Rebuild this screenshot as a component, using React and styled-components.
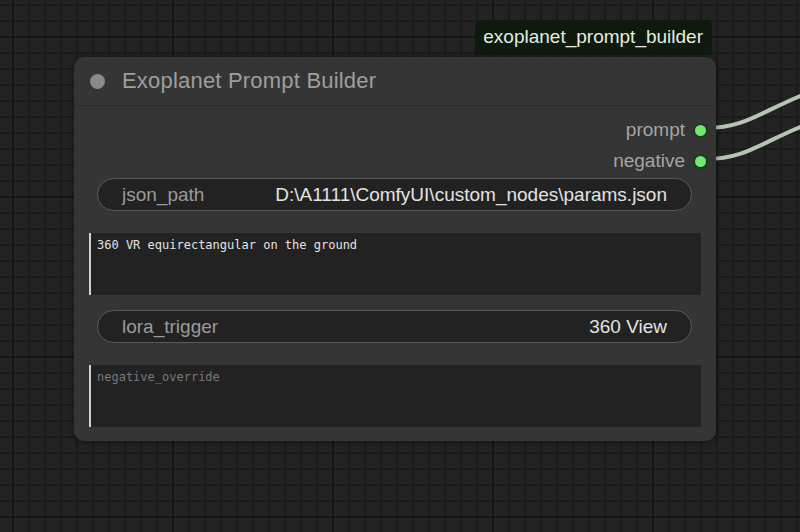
import React from "react";
import styled, { createGlobalStyle } from "styled-components";

const GlobalStyle = createGlobalStyle`
  html, body {
    margin: 0;
    padding: 0;
    background: #222222;
  }
  * { box-sizing: border-box; }
`;

const Canvas = styled.div`
  position: relative;
  width: 800px;
  height: 532px;
  overflow: hidden;
  background-color: #232323;
  background-image:
    linear-gradient(to right, #161616 2px, transparent 2px),
    linear-gradient(to bottom, #161616 2px, transparent 2px),
    linear-gradient(to right, #1a1a1a 2px, transparent 2px),
    linear-gradient(to bottom, #1a1a1a 2px, transparent 2px);
  background-size: 160px 160px, 160px 160px, 16px 16px, 16px 16px;
  background-position: 12px 36px, 12px 36px, 12px 4px, 12px 4px;
  font-family: "Liberation Sans", Arial, sans-serif;
`;

const Links = styled.svg`
  position: absolute;
  left: 0;
  top: 0;
  pointer-events: none;
`;

const Node = styled.div`
  position: absolute;
  left: ${(p) => p.x}px;
  top: ${(p) => p.y}px;
  width: ${(p) => p.w}px;
  background: #353535;
  border-radius: 10px;
  box-shadow: 0 1px 6px rgba(0, 0, 0, 0.45);
  display: flex;
  flex-direction: column;
`;

const Badge = styled.div`
  position: absolute;
  right: 4px;
  bottom: 100%;
  margin-bottom: 2px;
  padding: 5px 9px 6px 8px;
  background: #0e1a0e;
  color: #e4ece0;
  font-size: 19px;
  line-height: 24px;
  border-radius: 6px 6px 0 0;
`;

const TitleBar = styled.div`
  height: 49px;
  display: flex;
  align-items: center;
  gap: 17px;
  padding-left: 16px;
  border-bottom: 1px solid #2c2c2c;
  color: #9e9e9e;
  font-size: 22px;
  letter-spacing: 0.2px;
`;

const Dot = styled.span`
  width: 15px;
  height: 15px;
  border-radius: 50%;
  background: #8a8a8a;
`;

const Body = styled.div`
  display: flex;
  flex-direction: column;
  padding: 14px 15px 14px 15px;
`;

const Outputs = styled.div`
  display: flex;
  flex-direction: column;
  align-items: flex-end;
  gap: 11px;
  margin-right: -7px;
  margin-bottom: 7px;
`;

const Slot = styled.div`
  display: flex;
  align-items: center;
  gap: 8px;
  height: 20px;
  color: #a4a4a4;
  font-size: 19px;
`;

const SlotDot = styled.span`
  width: 15px;
  height: 15px;
  border-radius: 50%;
  background: #72e872;
  border: 2px solid #1e3a1e;
`;

const Combo = styled.div`
  display: flex;
  justify-content: space-between;
  align-items: center;
  height: 33px;
  margin: 0 9px 0 8px;
  padding: 0 24px;
  background: #222222;
  border: 1px solid #5a5a5a;
  border-radius: 17px;
  font-size: 19px;
`;

const ComboLabel = styled.span`
  color: #9a9a9a;
`;

const ComboValue = styled.span`
  color: #e2e2e2;
`;

const TextBox = styled.div`
  height: 62px;
  margin: 22px 0 15px;
  padding: 5px 6px;
  background: #222222;
  border-left: 2px solid #d0d0d0;
  font-family: "DejaVu Sans Mono", "Liberation Mono", monospace;
  font-size: 12px;
  line-height: 15px;
  color: ${(p) => (p.placeholder ? "#787878" : "#e2e2e2")};
`;

const LastBox = styled(TextBox)`
  margin-bottom: 0;
`;

export default function App() {
  return (
    <Canvas>
      <GlobalStyle />
      <Links width="800" height="532">
        <path d="M706 128 C 745 128, 760 112, 805 94" fill="none" stroke="#b6c4b4" strokeWidth="4" />
        <path d="M706 159 C 745 159, 760 143, 805 125" fill="none" stroke="#b6c4b4" strokeWidth="4" />
      </Links>
      <Node x={74} y={57} w={642}>
        <Badge>exoplanet_prompt_builder</Badge>
        <TitleBar>
          <Dot />
          Exoplanet Prompt Builder
        </TitleBar>
        <Body>
          <Outputs>
            <Slot>
              prompt
              <SlotDot />
            </Slot>
            <Slot>
              negative
              <SlotDot />
            </Slot>
          </Outputs>
          <Combo>
            <ComboLabel>json_path</ComboLabel>
            <ComboValue>D:\A1111\ComfyUI\custom_nodes\params.json</ComboValue>
          </Combo>
          <TextBox>360 VR equirectangular on the ground</TextBox>
          <Combo>
            <ComboLabel>lora_trigger</ComboLabel>
            <ComboValue>360 View</ComboValue>
          </Combo>
          <LastBox placeholder>negative_override</LastBox>
        </Body>
      </Node>
    </Canvas>
  );
}
